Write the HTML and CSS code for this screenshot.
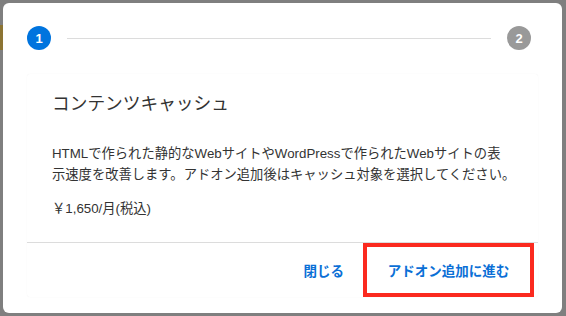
FILE: index.html
```html
<!DOCTYPE html>
<html lang="ja">
<head>
  <meta charset="utf-8">
  <title>コンテンツキャッシュ</title>
  <link rel="stylesheet" href="styles.css">
</head>
<body>
  <div class="modal">
    <div class="stepper">
      <span class="step active">1</span>
      <span class="step-line"></span>
      <span class="step">2</span>
    </div>

    <div class="panel">
      <div class="panel-body">
        <h2 class="title">コンテンツキャッシュ</h2>
        <p class="desc">HTMLで作られた静的なWebサイトやWordPressで作られたWebサイトの表<br>示速度を改善します。アドオン追加後はキャッシュ対象を選択してください。</p>
        <p class="price">￥1,650/月(税込)</p>
      </div>
      <div class="panel-footer">
        <button class="btn">閉じる</button>
        <button class="btn btn-next">アドオン追加に進む</button>
      </div>
    </div>
  </div>
</body>
</html>
```

FILE: styles.css
```css
html {
  background: #7f7f7f;
}
body {
  margin: 0;
  padding: 3px 4px 3px 3px;
  font-family: "Liberation Sans", "Noto Sans CJK JP", sans-serif;
  color: #333;
  /* a bit of the page behind the overlay */
  background: linear-gradient(#8c7433, #8c7433) 0 25px / 3px 25px no-repeat;
}

.modal {
  background: #fff;
  border-radius: 6px;
  height: 310px;
  padding: 23px 24px 0 24px;
  box-sizing: border-box;
}

/* STEPPER */
.stepper {
  display: flex;
  align-items: center;
  gap: 16px;
  padding-right: 7px;
}
.step {
  width: 24px;
  height: 24px;
  border-radius: 50%;
  background: #999;
  color: #fff;
  font-size: 13px;
  font-weight: bold;
  display: flex;
  align-items: center;
  justify-content: center;
  flex: none;
}
.step.active {
  background: #0074de;
}
.step-line {
  flex: 1;
  height: 1px;
  background: #dcdcdc;
}

/* PANEL */
.panel {
  margin-top: 24px;
  height: 223px;
  border-radius: 3px;
  box-shadow: 0 0 1px rgba(0, 0, 0, 0.08);
  display: flex;
  flex-direction: column;
}
.panel-body {
  padding: 16px 20px 23px 25px;
}
.title {
  margin: 0 0 25px;
  font-size: 17.7px;
  line-height: 28px;
  font-weight: normal;
  color: #333;
}
.desc {
  margin: 0 0 13px;
  font-size: 13.3px;
  line-height: 21px;
}
.price {
  margin: 0;
  font-size: 13.3px;
  line-height: 21px;
}

.panel-footer {
  flex: 1;
  border-top: 1px solid #dcdcdc;
  display: flex;
  justify-content: flex-end;
  align-items: stretch;
  padding-right: 4px;
}
.btn {
  background: none;
  border: none;
  font-family: inherit;
  font-size: 13.5px;
  font-weight: bold;
  color: #0a6fd6;
  padding: 0 17px;
  cursor: pointer;
}
/* highlighted next button */
.btn-next {
  border: 4px solid #fb2a1f;
  width: 171px;
  height: 54px;
  margin-left: 2px;
  padding: 0;
}
```
